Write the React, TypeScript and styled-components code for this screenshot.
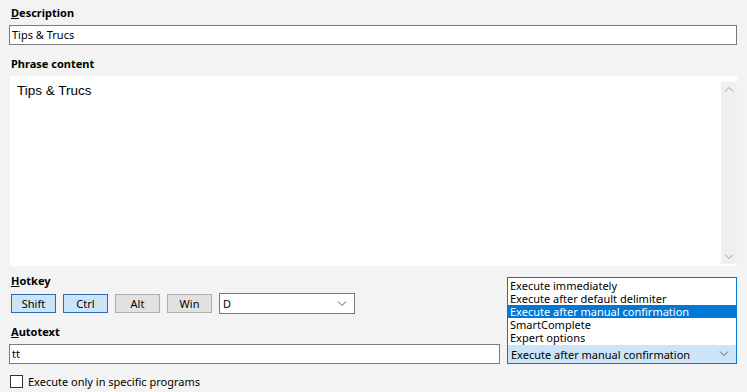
import React from "react";
import styled, { createGlobalStyle } from "styled-components";

const GlobalStyle = createGlobalStyle`
  html, body {
    margin: 0;
    padding: 0;
    background: #f3f3f3;
  }
  body {
    font-family: "Noto Sans", "DejaVu Sans", sans-serif;
    font-size: 11px;
    color: #000;
  }
`;

const Page = styled.div`
  width: 747px;
  height: 392px;
  box-sizing: border-box;
  padding: 5px 10px 0 9px;
  display: flex;
  flex-direction: column;
`;

const Label = styled.div`
  font-weight: bold;
  font-size: 11px;
  line-height: 16px;
  padding-left: 2px;
  margin-bottom: 4px;
`;

const Key = styled.span`
  text-decoration: underline;
`;

const TextBox = styled.div`
  box-sizing: border-box;
  width: 100%;
  height: 20px;
  border: 1px solid #7a7a7a;
  background: #fff;
  padding: 0 2px;
  line-height: 18px;
  font-size: 11px;
`;

const Section = styled.div`
  margin-top: 11px;
`;

const Editor = styled.div`
  margin-left: 1px;
  height: 190px;
  background: #fff;
  display: flex;
  justify-content: space-between;
`;

const EditorText = styled.div`
  font-family: "Liberation Sans", Arial, sans-serif;
  font-size: 13.5px;
  padding: 7px 0 0 7px;
`;

const ScrollBar = styled.div`
  width: 16px;
  margin: 6px 0 2px;
  background: #f0f0f0;
  display: flex;
  flex-direction: column;
  justify-content: space-between;
  align-items: center;
  padding: 4px 0;
`;

const Bottom = styled.div`
  display: grid;
  grid-template-columns: 491px 230px;
  column-gap: 7px;
  margin-top: 7px;
`;

const Column = styled.div`
  display: flex;
  flex-direction: column;
`;

const RightColumn = styled.div`
  position: relative;
  display: flex;
  flex-direction: column;
  padding-top: 71px;
`;

const KeyRow = styled.div`
  display: flex;
  align-items: center;
  gap: 7px;
  padding-left: 2px;
  margin-bottom: 10px;
`;

const ModButton = styled.div<{ $on?: boolean }>`
  box-sizing: border-box;
  width: 45px;
  height: 19px;
  border: 1px solid ${(p) => (p.$on ? "#2a6ab0" : "#adadad")};
  background: ${(p) => (p.$on ? "#cce4f7" : "#e1e1e1")};
  display: flex;
  align-items: center;
  justify-content: center;
  font-size: 11px;
`;

const Combo = styled.div<{ $width: number; $active?: boolean }>`
  box-sizing: border-box;
  width: ${(p) => p.$width}px;
  height: ${(p) => (p.$active ? 20 : 21)}px;
  border: 1px solid ${(p) => (p.$active ? "#0078d7" : "#7a7a7a")};
  background: ${(p) => (p.$active ? "#cce4f7" : "#fff")};
  display: flex;
  align-items: center;
  justify-content: space-between;
  padding: 0 7px 0 3px;
  font-size: 11px;
`;

const CheckRow = styled.div`
  display: flex;
  align-items: center;
  gap: 5px;
  margin-top: 9px;
  padding-left: 1px;
  height: 16px;
`;

const CheckBox = styled.div`
  box-sizing: border-box;
  width: 13px;
  height: 13px;
  border: 1px solid #333;
  background: #fff;
`;

const ListBox = styled.div`
  position: absolute;
  top: 4px;
  left: 0;
  width: 230px;
  box-sizing: border-box;
  border: 1px solid #0078d7;
  border-bottom: none;
  background: #fff;
  padding: 1px 0 1px;
`;

const Option = styled.div<{ $selected?: boolean }>`
  height: 13px;
  line-height: 13px;
  padding-left: 2px;
  font-size: 11px;
  white-space: nowrap;
  background: ${(p) => (p.$selected ? "#0078d7" : "transparent")};
  color: ${(p) => (p.$selected ? "#fff" : "#000")};
`;

const Chevron = ({ up, color = "#606060" }: { up?: boolean; color?: string }) => (
  <svg width="10" height="6" viewBox="0 0 10 6">
    <path
      d={up ? "M1 5.5 L5 1.5 L9 5.5" : "M1 0.5 L5 4.5 L9 0.5"}
      fill="none"
      stroke={color}
      strokeWidth="1"
    />
  </svg>
);

const options = [
  "Execute immediately",
  "Execute after default delimiter",
  "Execute after manual confirmation",
  "SmartComplete",
  "Expert options",
];

export default function App() {
  return (
    <>
      <GlobalStyle />
      <Page>
        <Label>
          <Key>D</Key>escription
        </Label>
        <TextBox>Tips &amp; Trucs</TextBox>

        <Section>
          <Label>Phrase content</Label>
          <Editor>
            <EditorText>Tips &amp; Trucs</EditorText>
            <ScrollBar>
              <Chevron up color="#a0a0a0" />
              <Chevron color="#a0a0a0" />
            </ScrollBar>
          </Editor>
        </Section>

        <Bottom>
          <Column>
            <Label>
              <Key>H</Key>otkey
            </Label>
            <KeyRow>
              <ModButton $on>Shift</ModButton>
              <ModButton $on>Ctrl</ModButton>
              <ModButton>Alt</ModButton>
              <ModButton>Win</ModButton>
              <Combo $width={136}>
                <span>D</span>
                <Chevron />
              </Combo>
            </KeyRow>
            <Label>
              <Key>A</Key>utotext
            </Label>
            <TextBox>tt</TextBox>
            <CheckRow>
              <CheckBox />
              <span>Execute only in specific programs</span>
            </CheckRow>
          </Column>
          <RightColumn>
            <ListBox>
              {options.map((o) => (
                <Option key={o} $selected={o === "Execute after manual confirmation"}>
                  {o}
                </Option>
              ))}
            </ListBox>
            <Combo $width={230} $active>
              <span>Execute after manual confirmation</span>
              <Chevron />
            </Combo>
          </RightColumn>
        </Bottom>
      </Page>
    </>
  );
}
